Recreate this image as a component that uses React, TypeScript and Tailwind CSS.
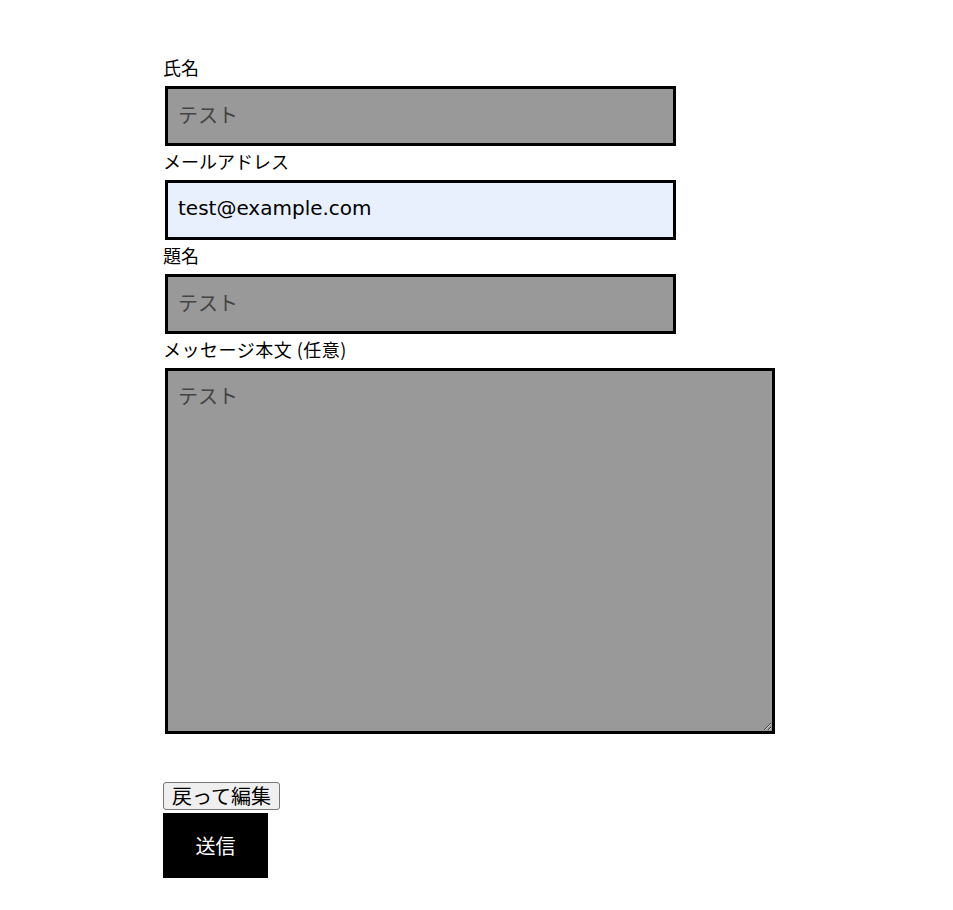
const font = "[font-family:'Noto_Sans_CJK_JP',sans-serif]";

function Field({ label, value, placeholder }: { label: string; value?: string; placeholder?: string }) {
  return (
    <div>
      <p className="h-[34px] text-[18px] leading-[30px] text-black">{label}</p>
      <input
        readOnly
        defaultValue={value}
        placeholder={placeholder}
        className={
          "ml-[2px] block h-[60px] w-[511px] border-[3px] border-black px-[10px] pb-[4px] text-[20px] text-black outline-none placeholder:text-[#444] " +
          (value ? "bg-[#e8f0fe] [font-family:'DejaVu_Sans',sans-serif] text-[19px]" : "bg-[#999999]")
        }
      />
    </div>
  );
}

export default function App() {
  return (
    <div className={`min-h-[910px] bg-white pl-[163px] pt-[52px] ${font}`}>
      <form>
        <Field label="氏名" placeholder="テスト" />
        <Field label="メールアドレス" value="test@example.com" />
        <Field label="題名" placeholder="テスト" />
        <div>
          <p className="h-[34px] text-[18px] leading-[30px] tracking-[0.5px] text-black">メッセージ本文 (任意)</p>
          <textarea
            readOnly
            placeholder="テスト"
            className="ml-[2px] block h-[366px] w-[610px] resize border-[3px] border-black bg-[#999999] px-[10px] pt-[10px] pb-[12px] text-[20px] leading-[30px] outline-none placeholder:text-[#444]"
          />
        </div>
        <div className="mt-[48px]">
          <button
            type="button"
            className="block h-[28px] rounded-[3px] border border-[#767676] bg-[#efefef] px-[8px] text-[20px] leading-[26px] text-black"
          >
            戻って編集
          </button>
          <button
            type="button"
            className="mt-[3px] block h-[65px] w-[105px] bg-black text-[20px] text-white"
          >
            送信
          </button>
        </div>
      </form>
    </div>
  );
}
